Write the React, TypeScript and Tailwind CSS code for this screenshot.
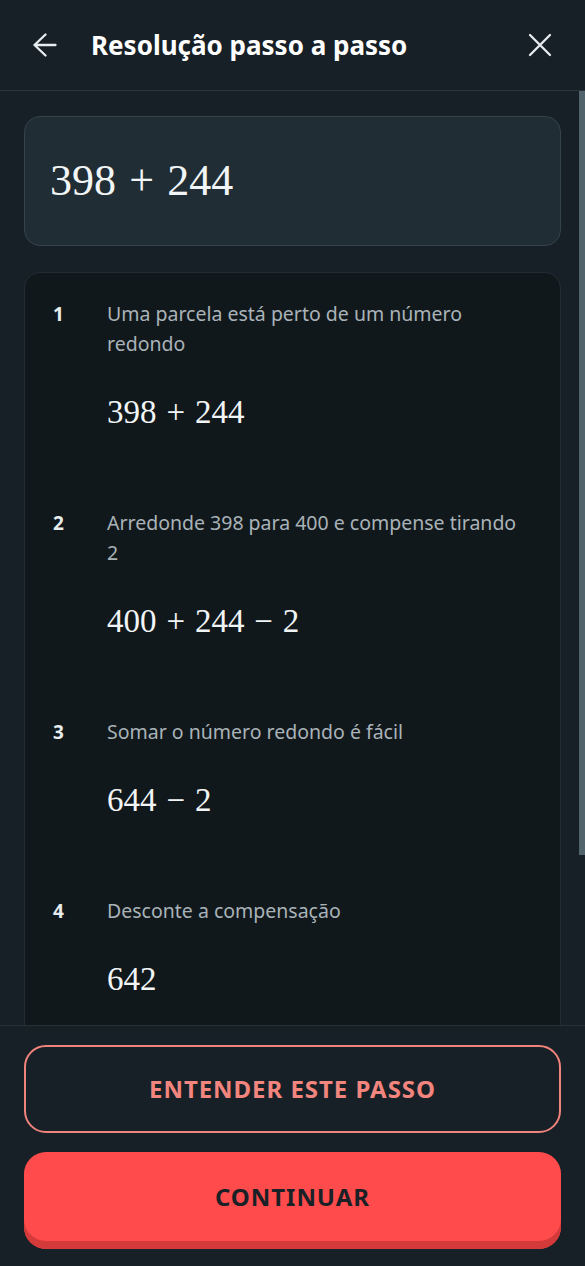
import React from "react";

const steps = [
  { n: 1, text: "Uma parcela está perto de um número redondo", math: ["398", "+", "244"] },
  { n: 2, text: "Arredonde 398 para 400 e compense tirando 2", math: ["400", "+", "244", "−", "2"] },
  { n: 3, text: "Somar o número redondo é fácil", math: ["644", "−", "2"] },
  { n: 4, text: "Desconte a compensação", math: ["642"] },
];

const MathLine = ({ tokens, big }: { tokens: string[]; big?: boolean }) => {
  return (
    <span
      className={`inline-flex items-baseline font-['Liberation_Serif',serif] text-[#f1f5f6] ${
        big ? "text-[44px]" : "text-[33px]"
      }`}
    >
      {tokens.map((t, i) =>
        t === "+" || t === "−" ? (
          <span key={i} className="mx-[0.3em]">
            {t}
          </span>
        ) : (
          <span key={i}>{t}</span>
        )
      )}
    </span>
  );
};

const App = () => {
  return (
    <div className="flex h-[1266px] w-[585px] flex-col overflow-hidden bg-[#172026] font-['Noto_Sans',sans-serif]">
      {/* header */}
      <div className="flex h-[91px] shrink-0 items-center border-b border-[#2a353b] pl-[33px] pr-[33px]">
        <svg width="24" height="24" viewBox="0 0 24 24" fill="none" stroke="#e6ecef" strokeWidth="2.3" strokeLinecap="round" strokeLinejoin="round">
          <path d="M1.5 12h21M12.5 1.5L1.5 12l11 10.5" />
        </svg>
        <h1 className="ml-[34px] flex-1 text-[26px] font-bold text-white">Resolução passo a passo</h1>
        <svg width="24" height="24" viewBox="0 0 24 24" fill="none" stroke="#e6ecef" strokeWidth="2.3" strokeLinecap="round">
          <path d="M2 2l20 20M22 2L2 22" />
        </svg>
      </div>

      {/* scroll area */}
      <div className="relative flex-1 overflow-hidden">
        <div className="px-6 pt-[25px]">
          <div className="flex h-[130px] items-center rounded-2xl border border-[#34434b] bg-[#212d35] px-[25px]">
            <MathLine tokens={["398", "+", "244"]} big />
          </div>

          <div className="mt-[26px] rounded-2xl border border-[#222d33] bg-[#11181c] px-[28px] pt-[26px] pb-10">
            {steps.map((s) => (
              <div key={s.n} className="mb-[70px] flex">
                <div className="w-[54px] shrink-0 text-[19px] leading-[30px] font-bold text-[#e7ecee]">{s.n}</div>
                <div className="flex-1 pr-1">
                  <p className="text-[19.5px] leading-[30px] text-[#a9b3b8]">{s.text}</p>
                  <div className="mt-[29px] flex h-[50px] items-center">
                    <MathLine tokens={s.math} />
                  </div>
                </div>
              </div>
            ))}
          </div>
        </div>
        {/* scrollbar */}
        <div className="absolute top-0 right-0 h-[764px] w-[6px] bg-[#52646b]" />
      </div>

      {/* footer */}
      <div className="flex shrink-0 flex-col gap-[19px] border-t border-[#263137] bg-[#172026] px-6 pt-[19px] pb-[17px]">
        <button className="h-[88px] rounded-[22px] border-2 border-[#f0837c] text-[24px] font-bold tracking-[0.04em] text-[#f2857d]">
          ENTENDER ESTE PASSO
        </button>
        <button className="h-[97px] rounded-[22px] bg-[#ff4b4b] pb-[8px] text-[24px] font-bold tracking-[0.04em] text-[#1a2126] shadow-[inset_0_-8px_0_#d43a3a]">
          CONTINUAR
        </button>
      </div>
    </div>
  );
};

export default App;
